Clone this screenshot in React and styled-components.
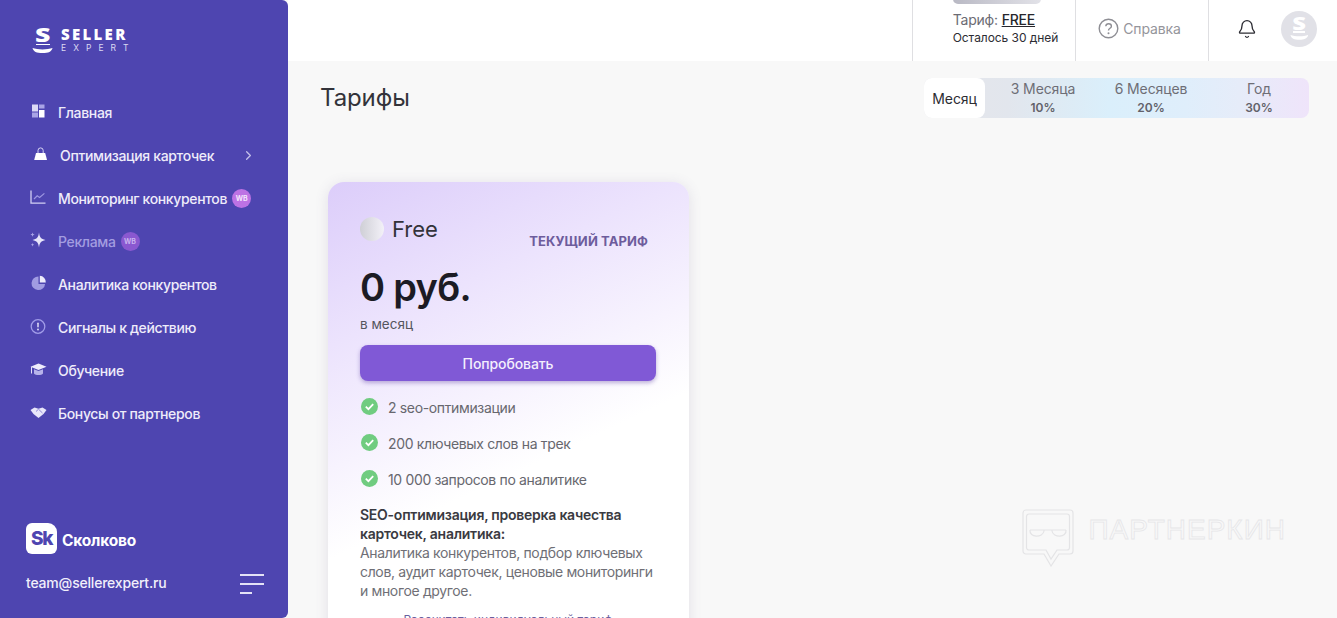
import React from 'react';
import styled, { createGlobalStyle } from 'styled-components';
import { ChevronRight, Bell } from 'lucide-react';

const GlobalStyle = createGlobalStyle`
  html, body {
    margin: 0;
    height: 100%;
    overflow: hidden;
    background: #f8f8f8;
  }
  * {
    box-sizing: border-box;
  }
  body {
    font-family: 'Inter', 'Noto Sans', 'Liberation Sans', sans-serif;
    color: #2c2c33;
  }
`;

const Page = styled.div`
  display: flex;
  width: 1337px;
  height: 618px;
  overflow: hidden;
  position: relative;
`;

const Sidebar = styled.aside`
  flex: 0 0 288px;
  height: 618px;
  background: #4e45b0;
  border-radius: 0 6px 6px 0;
  display: flex;
  flex-direction: column;
  padding: 27px 24px 24px 26px;
  color: #f1effb;
`;

const Logo = styled.div`
  display: flex;
  gap: 8px;
  padding-left: 6px;
  height: 27px;
  color: #fff;
`;

const Mark = styled.div`
  font-size: ${(p) => p.$size}px;
  width: 1.17em;
  display: flex;
  flex-direction: column;
  align-items: center;
  color: #fff;
`;

const MarkLetter = styled.span`
  font-family: 'Open Sans', sans-serif;
  font-weight: 800;
  font-size: 1.1em;
  line-height: 0.8em;
  transform: scaleX(1.35);
`;

const MarkLine = styled.span`
  display: block;
  width: 0.78em;
  height: 0.09em;
  margin-top: 0.06em;
  background: currentColor;
`;

const MarkSwoosh = styled.svg`
  display: block;
  width: 1.17em;
  height: 0.33em;
  margin-top: 0.17em;
`;

const LogoText = styled.div`
  display: flex;
  flex-direction: column;
`;

const LogoTop = styled.span`
  font-family: 'Open Sans', sans-serif;
  font-size: 15px;
  line-height: 14px;
  font-weight: 800;
  letter-spacing: 2.3px;
`;

const LogoBottom = styled.span`
  font-size: 8.5px;
  line-height: 11px;
  margin-top: 2px;
  letter-spacing: 7px;
  color: #dcd9f2;
`;

const Nav = styled.nav`
  display: flex;
  flex-direction: column;
  gap: 11px;
  margin-top: 42px;
`;

const NavItem = styled.div`
  display: flex;
  align-items: center;
  height: 32px;
  font-size: 14px;
  letter-spacing: -0.35px;
  font-weight: 500;
  padding-left: ${(p) => (p.$shift ? '6px' : '4px')};
  color: ${(p) => (p.$muted ? '#a39de0' : '#eeecfa')};
`;

const NavIcon = styled.svg`
  width: 18px;
  height: 18px;
  flex: 0 0 18px;
  margin-right: 10px;
  margin-top: -3px;
`;

const WbBadge = styled.span`
  display: inline-flex;
  align-items: center;
  justify-content: center;
  width: 19px;
  height: 19px;
  border-radius: 50%;
  margin-left: 5px;
  font-size: 7px;
  font-weight: 700;
  letter-spacing: 0;
  background: ${(p) => (p.$dim ? '#8a58d0' : '#bd72e4')};
  color: ${(p) => (p.$dim ? '#c9b3ef' : '#f5e6fd')};
`;

const Chevron = styled(ChevronRight)`
  width: 15px;
  height: 15px;
  margin-left: auto;
  margin-right: 8px;
  color: #c5c1ea;
`;

const SideFooter = styled.div`
  margin-top: auto;
  display: flex;
  flex-direction: column;
`;

const Skolkovo = styled.div`
  display: flex;
  align-items: center;
  gap: 5px;
`;

const SkBox = styled.div`
  width: 31px;
  height: 31px;
  border-radius: 6px 9px 6px 6px;
  background: #fff;
  color: #4e45b0;
  font-size: 19px;
  font-weight: 800;
  letter-spacing: -1.5px;
  display: flex;
  align-items: center;
  justify-content: center;
`;

const SkName = styled.span`
  font-size: 15.5px;
  font-weight: 700;
  color: #fff;
  letter-spacing: -0.2px;
  padding-top: 3px;
`;

const FooterRow = styled.div`
  display: flex;
  align-items: center;
  justify-content: space-between;
  margin-top: 16px;
  height: 24px;
  font-size: 14px;
  letter-spacing: -0.2px;
  font-weight: 500;
`;

const Burger = styled.div`
  display: flex;
  flex-direction: column;
  gap: 7px;
  width: 24px;
  margin-bottom: -3px;
`;

const BurgerLine = styled.span`
  display: block;
  height: 2px;
  width: ${(p) => p.$w}px;
  background: #e4e2f6;
`;

const Main = styled.div`
  flex: 1;
  min-width: 0;
  display: flex;
  flex-direction: column;
`;

const TopBar = styled.header`
  flex: 0 0 61px;
  background: #fff;
  display: flex;
  justify-content: flex-end;
`;

const TopCell = styled.div`
  width: ${(p) => p.$w}px;
  border-left: 1px solid #dfdfe2;
  display: flex;
  align-items: center;
  justify-content: center;
  padding-bottom: 4px;
  position: relative;
`;

const PlanBar = styled.div`
  position: absolute;
  top: -6px;
  left: 40px;
  width: 88px;
  height: 10px;
  border-radius: 5px;
  background: linear-gradient(90deg, #b9b9c4, #e2e2e8);
`;

const PlanInfo = styled.div`
  display: flex;
  flex-direction: column;
  align-items: flex-start;
  gap: 1px;
  padding-left: 23px;
`;

const PlanName = styled.div`
  font-size: 14px;
  line-height: 18px;
  color: #6b6b73;
  letter-spacing: -0.2px;
`;

const PlanFree = styled.span`
  color: #26262c;
  font-weight: 500;
  text-decoration: underline;
`;

const PlanLeft = styled.div`
  font-size: 12px;
  line-height: 16px;
  color: #2c2c33;
  letter-spacing: -0.05px;
`;

const Help = styled.div`
  display: flex;
  align-items: center;
  gap: 4px;
  font-size: 14px;
  color: #95959b;
  padding-right: 5px;
  letter-spacing: -0.1px;
`;

const HelpIcon = styled.svg`
  width: 21px;
  height: 21px;
`;

const UserCell = styled.div`
  display: flex;
  align-items: center;
  gap: 24px;
  padding-left: 4px;
`;

const BellIcon = styled(Bell)`
  width: 20px;
  height: 20px;
  color: #2c2c33;
`;

const Avatar = styled.div`
  width: 36px;
  height: 36px;
  border-radius: 50%;
  background: #e1e1e7;
  display: flex;
  align-items: center;
  justify-content: center;
  margin-right: -4px;
`;

const Content = styled.main`
  flex: 1;
  padding: 17px 28px 0 32px;
  position: relative;
`;

const TitleRow = styled.div`
  display: flex;
  align-items: flex-start;
  justify-content: space-between;
`;

const Title = styled.h1`
  margin: 0;
  font-size: 24px;
  line-height: 40px;
  font-weight: 400;
  letter-spacing: -0.1px;
  color: #33333a;
`;

const Tabs = styled.div`
  display: flex;
  width: 385px;
  height: 40px;
  border-radius: 8px;
  background: linear-gradient(90deg, #e6e6ea 0%, #e2e6ed 22%, #daeffb 48%, #dfeefb 68%, #e6ecf9 82%, #efe4fa 100%);
`;

const Tab = styled.div`
  flex: ${(p) => p.$flex};
  display: flex;
  flex-direction: column;
  align-items: center;
  justify-content: center;
  padding-left: ${(p) => p.$pad || 0}px;
  border-radius: 8px;
  background: ${(p) => (p.$active ? '#fff' : 'transparent')};
  color: ${(p) => (p.$active ? '#2c2c33' : '#6e6e76')};
  font-size: 14px;
  line-height: 19px;
  letter-spacing: -0.1px;
`;

const TabSale = styled.span`
  font-size: 12px;
  line-height: 16px;
  margin: 2px 0;
  font-weight: 600;
  letter-spacing: 0;
  color: #62626a;
`;

const Card = styled.section`
  width: 361px;
  height: 520px;
  margin: 64px 0 0 8px;
  padding: 34px 33px 0 32px;
  border-radius: 16px;
  background: linear-gradient(155deg, #dccdfa 0%, #ece3fd 24%, #f7f3fe 42%, #ffffff 55%);
  box-shadow: 0 2px 14px rgba(90, 80, 130, 0.14);
`;

const CardHead = styled.div`
  display: flex;
  justify-content: space-between;
  align-items: flex-start;
  padding-right: 8px;
`;

const PlanTitle = styled.div`
  display: flex;
  align-items: center;
  gap: 8px;
  font-size: 22px;
  line-height: 26px;
  color: #33333a;
`;

const PlanDot = styled.span`
  width: 24px;
  height: 24px;
  border-radius: 50%;
  background: linear-gradient(90deg, #cfcfd6, #f3f1f8);
`;

const Current = styled.span`
  font-size: 13px;
  line-height: 16px;
  font-weight: 700;
  letter-spacing: 0.1px;
  color: #6d5c9c;
  margin-top: 17px;
`;

const Price = styled.div`
  font-size: 38px;
  line-height: 48px;
  font-weight: 600;
  letter-spacing: -0.7px;
  color: #1c1b24;
  margin-top: 14px;
`;

const Per = styled.div`
  font-size: 13.5px;
  line-height: 18px;
  color: #55555d;
  margin-top: 4px;
`;

const TryButton = styled.button`
  display: block;
  width: 100%;
  height: 36px;
  margin-top: 12px;
  border: 0;
  border-radius: 8px;
  background: #8059d6;
  color: #f4effd;
  font: 500 14px 'Inter', sans-serif;
  letter-spacing: -0.1px;
  box-shadow: 0 2px 4px rgba(90, 60, 160, 0.4);
`;

const Features = styled.ul`
  list-style: none;
  margin: 16px 0 0;
  padding: 0;
  display: flex;
  flex-direction: column;
  gap: 16px;
`;

const Feature = styled.li`
  display: flex;
  align-items: center;
  height: 20px;
  gap: 9px;
  font-size: 14px;
  color: #67676e;
  letter-spacing: -0.35px;
`;

const CheckIcon = styled.svg`
  width: 19px;
  height: 19px;
  margin-top: -1px;
`;

const Description = styled.p`
  margin: 16px 0 0;
  font-size: 14px;
  line-height: 19px;
  color: #6f6f76;
  letter-spacing: -0.35px;
`;

const DescriptionHead = styled.strong`
  display: block;
  font-weight: 600;
  color: #3a3a41;
  letter-spacing: -0.25px;
`;

const Custom = styled.div`
  margin-top: 12px;
  text-align: center;
  font-size: 12px;
  line-height: 16px;
  color: #6a5f9e;
`;

const Watermark = styled.div`
  position: absolute;
  right: 51px;
  top: 448px;
  display: flex;
  align-items: flex-start;
  gap: 14px;
`;

const WatermarkIcon = styled.svg`
  width: 52px;
  height: 58px;
`;

const WatermarkText = styled.span`
  font-family: 'Liberation Sans', sans-serif;
  font-size: 28px;
  line-height: 24px;
  letter-spacing: 1px;
  color: transparent;
  -webkit-text-stroke: 0.8px #e6e6e8;
  margin-top: 9px;
`;

const HomeGlyph = (
  <NavIcon viewBox="0 0 18 18">
    <rect x="2" y="2.5" width="6" height="7" fill="#dcd9f6" />
    <rect x="2" y="10.5" width="6" height="5" fill="#a9a4e6" />
    <rect x="9" y="2.5" width="5.5" height="4" fill="#a9a4e6" />
    <rect x="9" y="8" width="5.5" height="7.5" fill="#fff" />
  </NavIcon>
);

const BagGlyph = (
  <NavIcon viewBox="0 0 18 18">
    <path d="M6 8V5.5a2.6 2.6 0 0 1 5.2 0V8" fill="none" stroke="#d8d5f4" strokeWidth="1" />
    <path d="M4 8h9.2l1.8 7H2.2z" fill="#fff" />
  </NavIcon>
);

const ChartGlyph = (
  <NavIcon viewBox="0 0 18 18">
    <path d="M1 2.5v12.6h14.5" fill="none" stroke="#d2cff3" strokeWidth="1.3" />
    <path d="M4 11l3.2-3.2 2.4 1.6 4.8-4" fill="none" stroke="#9d97e2" strokeWidth="1.2" />
  </NavIcon>
);

const SparkGlyph = (
  <NavIcon viewBox="0 0 18 18">
    <path d="M9 1.5c.7 5 2 6.4 6.5 7.5-4.5 1.1-5.8 2.5-6.5 7.5-.7-5-2-6.4-6.5-7.5C7 7.9 8.3 6.5 9 1.5z" fill="#e8e6fa" />
    <path d="M2.5 1.5l.6 1.5 1.5.6-1.5.6-.6 1.5-.6-1.5-1.5-.6 1.5-.6zM2.5 12l.5 1.2 1.2.5-1.2.5-.5 1.2-.5-1.2-1.2-.5 1.2-.5z" fill="#a9a4e6" />
  </NavIcon>
);

const PieGlyph = (
  <NavIcon viewBox="0 0 18 18">
    <path d="M8.5 2.5a6.8 6.8 0 1 0 6.6 7.4H8.5z" fill="#a19ce2" />
    <path d="M9.8 1.8a6.2 6.2 0 0 1 6 6.8h-6z" fill="#eeecfb" />
  </NavIcon>
);

const AlertGlyph = (
  <NavIcon viewBox="0 0 18 18">
    <circle cx="8" cy="9.5" r="6.8" fill="none" stroke="#a19ce8" strokeWidth="1.3" />
    <rect x="7.3" y="5.5" width="1.4" height="5" rx=".7" fill="#e8e6fa" />
    <circle cx="8" cy="12.5" r=".9" fill="#e8e6fa" />
  </NavIcon>
);

const CapGlyph = (
  <NavIcon viewBox="0 0 18 18">
    <path d="M8.5 3.5l8 3.2-8 3.2-8-3.2z" fill="#eeecfb" />
    <path d="M4 9.2v4.2c1.5 2 7.5 2 9 0V9.2L8.5 11z" fill="#b7b3ea" />
    <path d="M1.5 7v6.5" stroke="#e4e2f8" strokeWidth="1" />
  </NavIcon>
);

const HandsGlyph = (
  <NavIcon viewBox="0 0 18 18">
    <path d="M.5 7l4-2.5 4 1.2 4-1.2 4 2.5-3 4-5 4-5-4z" fill="#e8e6fa" />
    <path d="M6 8.5l2.5-2.3 4 3.8" fill="none" stroke="#8f89d8" strokeWidth="1" />
  </NavIcon>
);

const menu = [
  { label: 'Главная', icon: HomeGlyph },
  { label: 'Оптимизация карточек', icon: BagGlyph, shift: true, chevron: true },
  { label: 'Мониторинг конкурентов', icon: ChartGlyph, wb: true },
  { label: 'Реклама', icon: SparkGlyph, wb: true, muted: true },
  { label: 'Аналитика конкурентов', icon: PieGlyph },
  { label: 'Сигналы к действию', icon: AlertGlyph },
  { label: 'Обучение', icon: CapGlyph },
  { label: 'Бонусы от партнеров', icon: HandsGlyph },
];

const features = ['2 seo-оптимизации', '200 ключевых слов на трек', '10 000 запросов по аналитике'];

const tabs = [
  { label: 'Месяц', flex: '0 0 61px', active: true },
  { label: '3 Месяца', sale: '10%', flex: '0 0 116px' },
  { label: '6 Месяцев', sale: '20%', flex: '0 0 100px' },
  { label: 'Год', sale: '30%', flex: '0 0 108px', pad: 8 },
];

const BrandMark = ({ size }) => (
  <Mark $size={size}>
    <MarkLetter>S</MarkLetter>
    <MarkLine />
    <MarkSwoosh viewBox="0 0 21 6" preserveAspectRatio="none">
      <path d="M.5 0c5 2 15 2 20 0-1 4-4 5.5-10 5.5S1.500 4 .5 0z" fill="currentColor" />
    </MarkSwoosh>
  </Mark>
);

const App = () => {
  return (
    <Page>
      <GlobalStyle />
      <Sidebar>
        <Logo>
          <BrandMark size={18} />
          <LogoText>
            <LogoTop>SELLER</LogoTop>
            <LogoBottom>EXPERT</LogoBottom>
          </LogoText>
        </Logo>
        <Nav>
          {menu.map((item) => (
            <NavItem key={item.label} $shift={item.shift} $muted={item.muted}>
              {item.icon}
              {item.label}
              {item.wb && <WbBadge $dim={item.muted}>WB</WbBadge>}
              {item.chevron && <Chevron />}
            </NavItem>
          ))}
        </Nav>
        <SideFooter>
          <Skolkovo>
            <SkBox>Sk</SkBox>
            <SkName>Сколково</SkName>
          </Skolkovo>
          <FooterRow>
            team@sellerexpert.ru
            <Burger>
              <BurgerLine $w={24} />
              <BurgerLine $w={24} />
              <BurgerLine $w={12} />
            </Burger>
          </FooterRow>
        </SideFooter>
      </Sidebar>
      <Main>
        <TopBar>
          <TopCell $w={163}>
            <PlanBar />
            <PlanInfo>
              <PlanName>
                Тариф: <PlanFree>FREE</PlanFree>
              </PlanName>
              <PlanLeft>Осталось 30 дней</PlanLeft>
            </PlanInfo>
          </TopCell>
          <TopCell $w={133}>
            <Help>
              <HelpIcon viewBox="0 0 21 21">
                <circle cx="10.5" cy="10.5" r="9.3" fill="none" stroke="#8e8e94" strokeWidth="1.4" />
                <path d="M7.8 8.2c.2-3.3 5.6-3.3 5.6 0 0 2.2-2.9 2-2.9 4.4" fill="none" stroke="#8e8e94" strokeWidth="1.4" />
                <circle cx="10.5" cy="15.2" r="1" fill="#8e8e94" />
              </HelpIcon>
              Справка
            </Help>
          </TopCell>
          <TopCell $w={129}>
            <UserCell>
              <BellIcon strokeWidth={1.6} />
              <Avatar>
                <BrandMark size={16} />
              </Avatar>
            </UserCell>
          </TopCell>
        </TopBar>
        <Content>
          <TitleRow>
            <Title>Тарифы</Title>
            <Tabs>
              {tabs.map((tab) => (
                <Tab key={tab.label} $flex={tab.flex} $active={tab.active} $pad={tab.pad}>
                  {tab.label}
                  {tab.sale && <TabSale>{tab.sale}</TabSale>}
                </Tab>
              ))}
            </Tabs>
          </TitleRow>
          <Card>
            <CardHead>
              <PlanTitle>
                <PlanDot />
                Free
              </PlanTitle>
              <Current>ТЕКУЩИЙ ТАРИФ</Current>
            </CardHead>
            <Price>0 руб.</Price>
            <Per>в месяц</Per>
            <TryButton>Попробовать</TryButton>
            <Features>
              {features.map((text) => (
                <Feature key={text}>
                  <CheckIcon viewBox="0 0 19 19">
                    <circle cx="9.5" cy="9.5" r="8.5" fill="#70cc80" />
                    <path d="M5.8 9.7l2.6 2.5 4.8-5" fill="none" stroke="#fff" strokeWidth="1.8" />
                  </CheckIcon>
                  {text}
                </Feature>
              ))}
            </Features>
            <Description>
              <DescriptionHead>SEO-оптимизация, проверка качества карточек, аналитика:</DescriptionHead>
              Аналитика конкурентов, подбор ключевых слов, аудит карточек, ценовые мониторинги и многое другое.
            </Description>
            <Custom>Рассчитать индивидуальный тариф</Custom>
          </Card>
          <Watermark>
            <WatermarkIcon viewBox="0 0 52 58" fill="none" stroke="#e4e4e6" strokeWidth="1.2">
              <path d="M4 1h44a3 3 0 0 1 3 3v38a3 3 0 0 1-3 3H37l-8 12-7-12H4a3 3 0 0 1-3-3V4a3 3 0 0 1 3-3z" />
              <path d="M7 5h38a2.5 2.5 0 0 1 2.5 2.5v31a2.5 2.5 0 0 1-2.5 2.5H35l-6 9-5-9H7a2.5 2.5 0 0 1-2.5-2.5v-31A2.5 2.5 0 0 1 7 5z" />
              <path d="M8 21h36M8 21c-1 8 13 8 14 1v-1M44 21c1 8-13 8-14 1v-1" />
            </WatermarkIcon>
            <WatermarkText>ПАРТНЕРКИН</WatermarkText>
          </Watermark>
        </Content>
      </Main>
    </Page>
  );
};

export default App;
